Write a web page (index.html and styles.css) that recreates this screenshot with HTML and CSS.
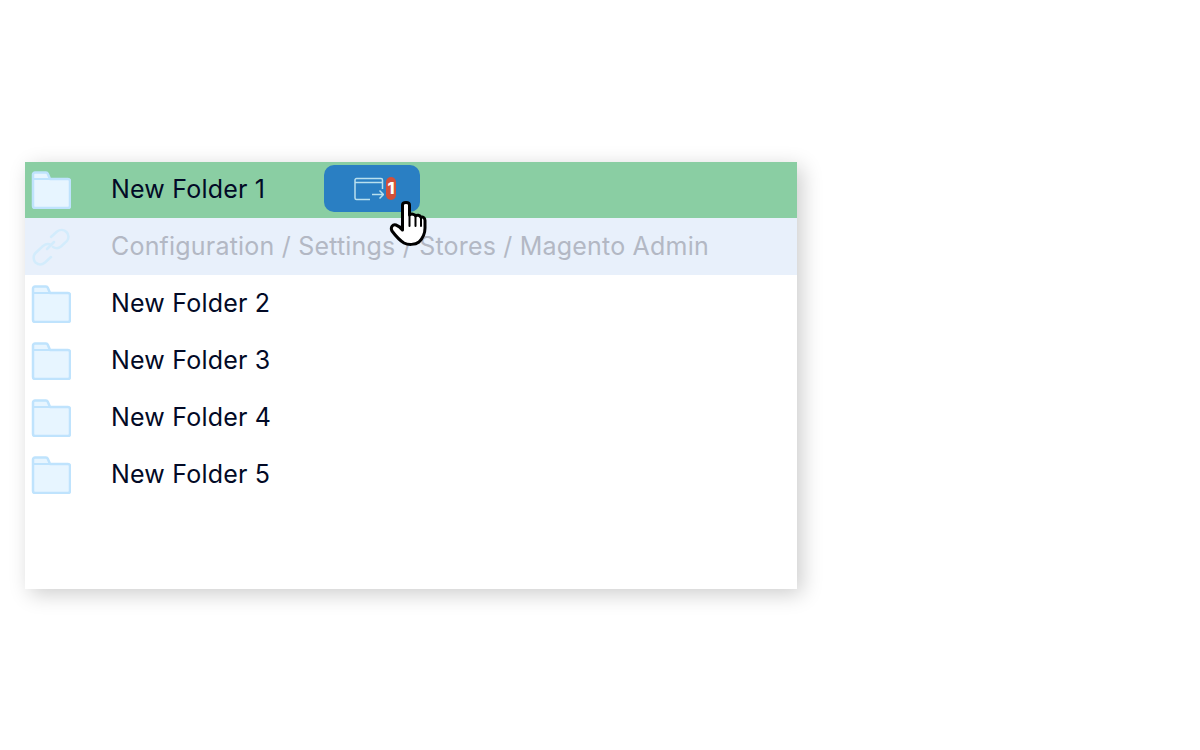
FILE: index.html
```html
<!DOCTYPE html>
<html lang="en">
<head>
    <meta charset="UTF-8">
    <meta name="viewport" content="width=device-width, initial-scale=1.0">
    <title>Folders</title>
    <link rel="stylesheet" href="styles.css">
</head>
<body>
    <svg class="defs" width="0" height="0">
        <symbol id="folder" viewBox="0 0 40 38">
            <path d="M2 6.500V3.500A2 2 0 0 1 4 1.500H15A2 2 0 0 1 16.800 2.700L19 8H37A2 2 0 0 1 39 10V35A2 2 0 0 1 37 37H4A2 2 0 0 1 2 35Z" fill="#e7f5ff" stroke="#bfe3fd" stroke-width="2.500" stroke-linejoin="round"/>
            <path d="M2 8H19" fill="none" stroke="#bfe3fd" stroke-width="2"/>
        </symbol>
    </svg>
    <div class="panel">
        <div class="row row-active">
            <svg class="icon"><use href="#folder"/></svg>
            <span class="label">New Folder 1</span>
        </div>
        <div class="row row-link">
            <svg class="icon" viewBox="0 0 40 38" fill="none" stroke="#d3ecfc" stroke-width="2.500" stroke-linecap="round">
                <path d="M16 21L23 14"/>
                <path d="M20 9L26 3.500C29 1.500 33 1.500 35.500 4C38 6.500 38 10.500 36 13L30 18.500C27.500 20.500 24.500 20.500 22 19"/>
                <path d="M20 17C17.500 15.500 14.500 16 12 18L4.500 25C2 27.500 2 32 4.500 34.500C7.500 37 11 37 14 34.500L20 29"/>
            </svg>
            <span class="label">Configuration / Settings / Stores / Magento Admin</span>
        </div>
        <div class="row">
            <svg class="icon"><use href="#folder"/></svg>
            <span class="label">New Folder 2</span>
        </div>
        <div class="row">
            <svg class="icon"><use href="#folder"/></svg>
            <span class="label">New Folder 3</span>
        </div>
        <div class="row">
            <svg class="icon"><use href="#folder"/></svg>
            <span class="label">New Folder 4</span>
        </div>
        <div class="row">
            <svg class="icon"><use href="#folder"/></svg>
            <span class="label">New Folder 5</span>
        </div>

        <!-- drag preview and cursor sit over the rows -->
        <div class="drag-chip">
            <svg class="move-icon" viewBox="0 0 30 24" fill="none" stroke="#b9e0ee" stroke-width="1.500">
                <path d="M16 22.500H2.500A1.500 1.500 0 0 1 1 21V3A1.500 1.500 0 0 1 2.500 1.500H27A1.500 1.500 0 0 1 28.500 3V12"/>
                <path d="M1 5.500H28.500"/>
                <path d="M18 17.500H29.500M25.500 13.500L29.500 17.500L25.500 21.500"/>
            </svg>
            <span class="count">1</span>
        </div>
        <svg class="cursor" viewBox="0 0 40 47">
            <path d="M14.500 5C14.500 1.500 21.500 1.500 21.500 5V15C23 13.500 27 14 27.500 16C29 14.500 32 15 33 17.500C34.500 16.500 37 17.500 37 20.500V28C37 34 34 39 31 42C27 45 20 45 16 43C11 40 7 35 4 31C2 27 5 24 8 25C11 26 13 28 14.500 30Z" fill="#fff" stroke="#000" stroke-width="3" stroke-linejoin="round"/>
            <path d="M21.500 15V26M27.500 16V26M33 17.500V26" fill="none" stroke="#000" stroke-width="2" stroke-linecap="round"/>
        </svg>
    </div>
</body>
</html>
```

FILE: styles.css
```css
body {
    margin: 0;
    height: 750px;
    background: #fff;
    font-family: Inter, "Liberation Sans", sans-serif;
    overflow: hidden;
}

.defs {
    display: block;
}

.panel {
    position: relative;
    width: 772px;
    height: 427px;
    margin: 162px 0 0 25px;
    background: #fff;
    box-shadow: 5px 5px 20px rgba(0, 0, 0, 0.2);
}

.row {
    display: flex;
    align-items: center;
    height: 57px;
    padding-left: 6px;
    font-size: 25px;
    font-weight: 380;
    letter-spacing: 0.2px;
    color: #020a26;
}

.row-active {
    height: 56px;
    background: #8acea3;
}

.label {
    margin-left: 40px;
    padding-bottom: 2px;
    white-space: nowrap;
}

.row-link {
    background: #e8f0fb;
    color: #b3b8c4;
}

.icon {
    width: 40px;
    height: 38px;
    flex: none;
}

.drag-chip {
    position: absolute;
    left: 299px;
    top: 3px;
    width: 96px;
    height: 47px;
    display: flex;
    align-items: center;
    justify-content: center;
    gap: 2px;
    padding-left: 6px;
    box-sizing: border-box;
    background: #2a7fc3;
    border-radius: 10px;
}

.move-icon {
    width: 30px;
    height: 24px;
}

.count {
    width: 10px;
    height: 23px;
    border-radius: 5px;
    background: #d2503a;
    color: #fff;
    font-size: 16px;
    font-weight: 800;
    line-height: 23px;
    text-align: center;
}

.cursor {
    position: absolute;
    left: 363px;
    top: 38px;
    width: 40px;
    height: 47px;
}
```
